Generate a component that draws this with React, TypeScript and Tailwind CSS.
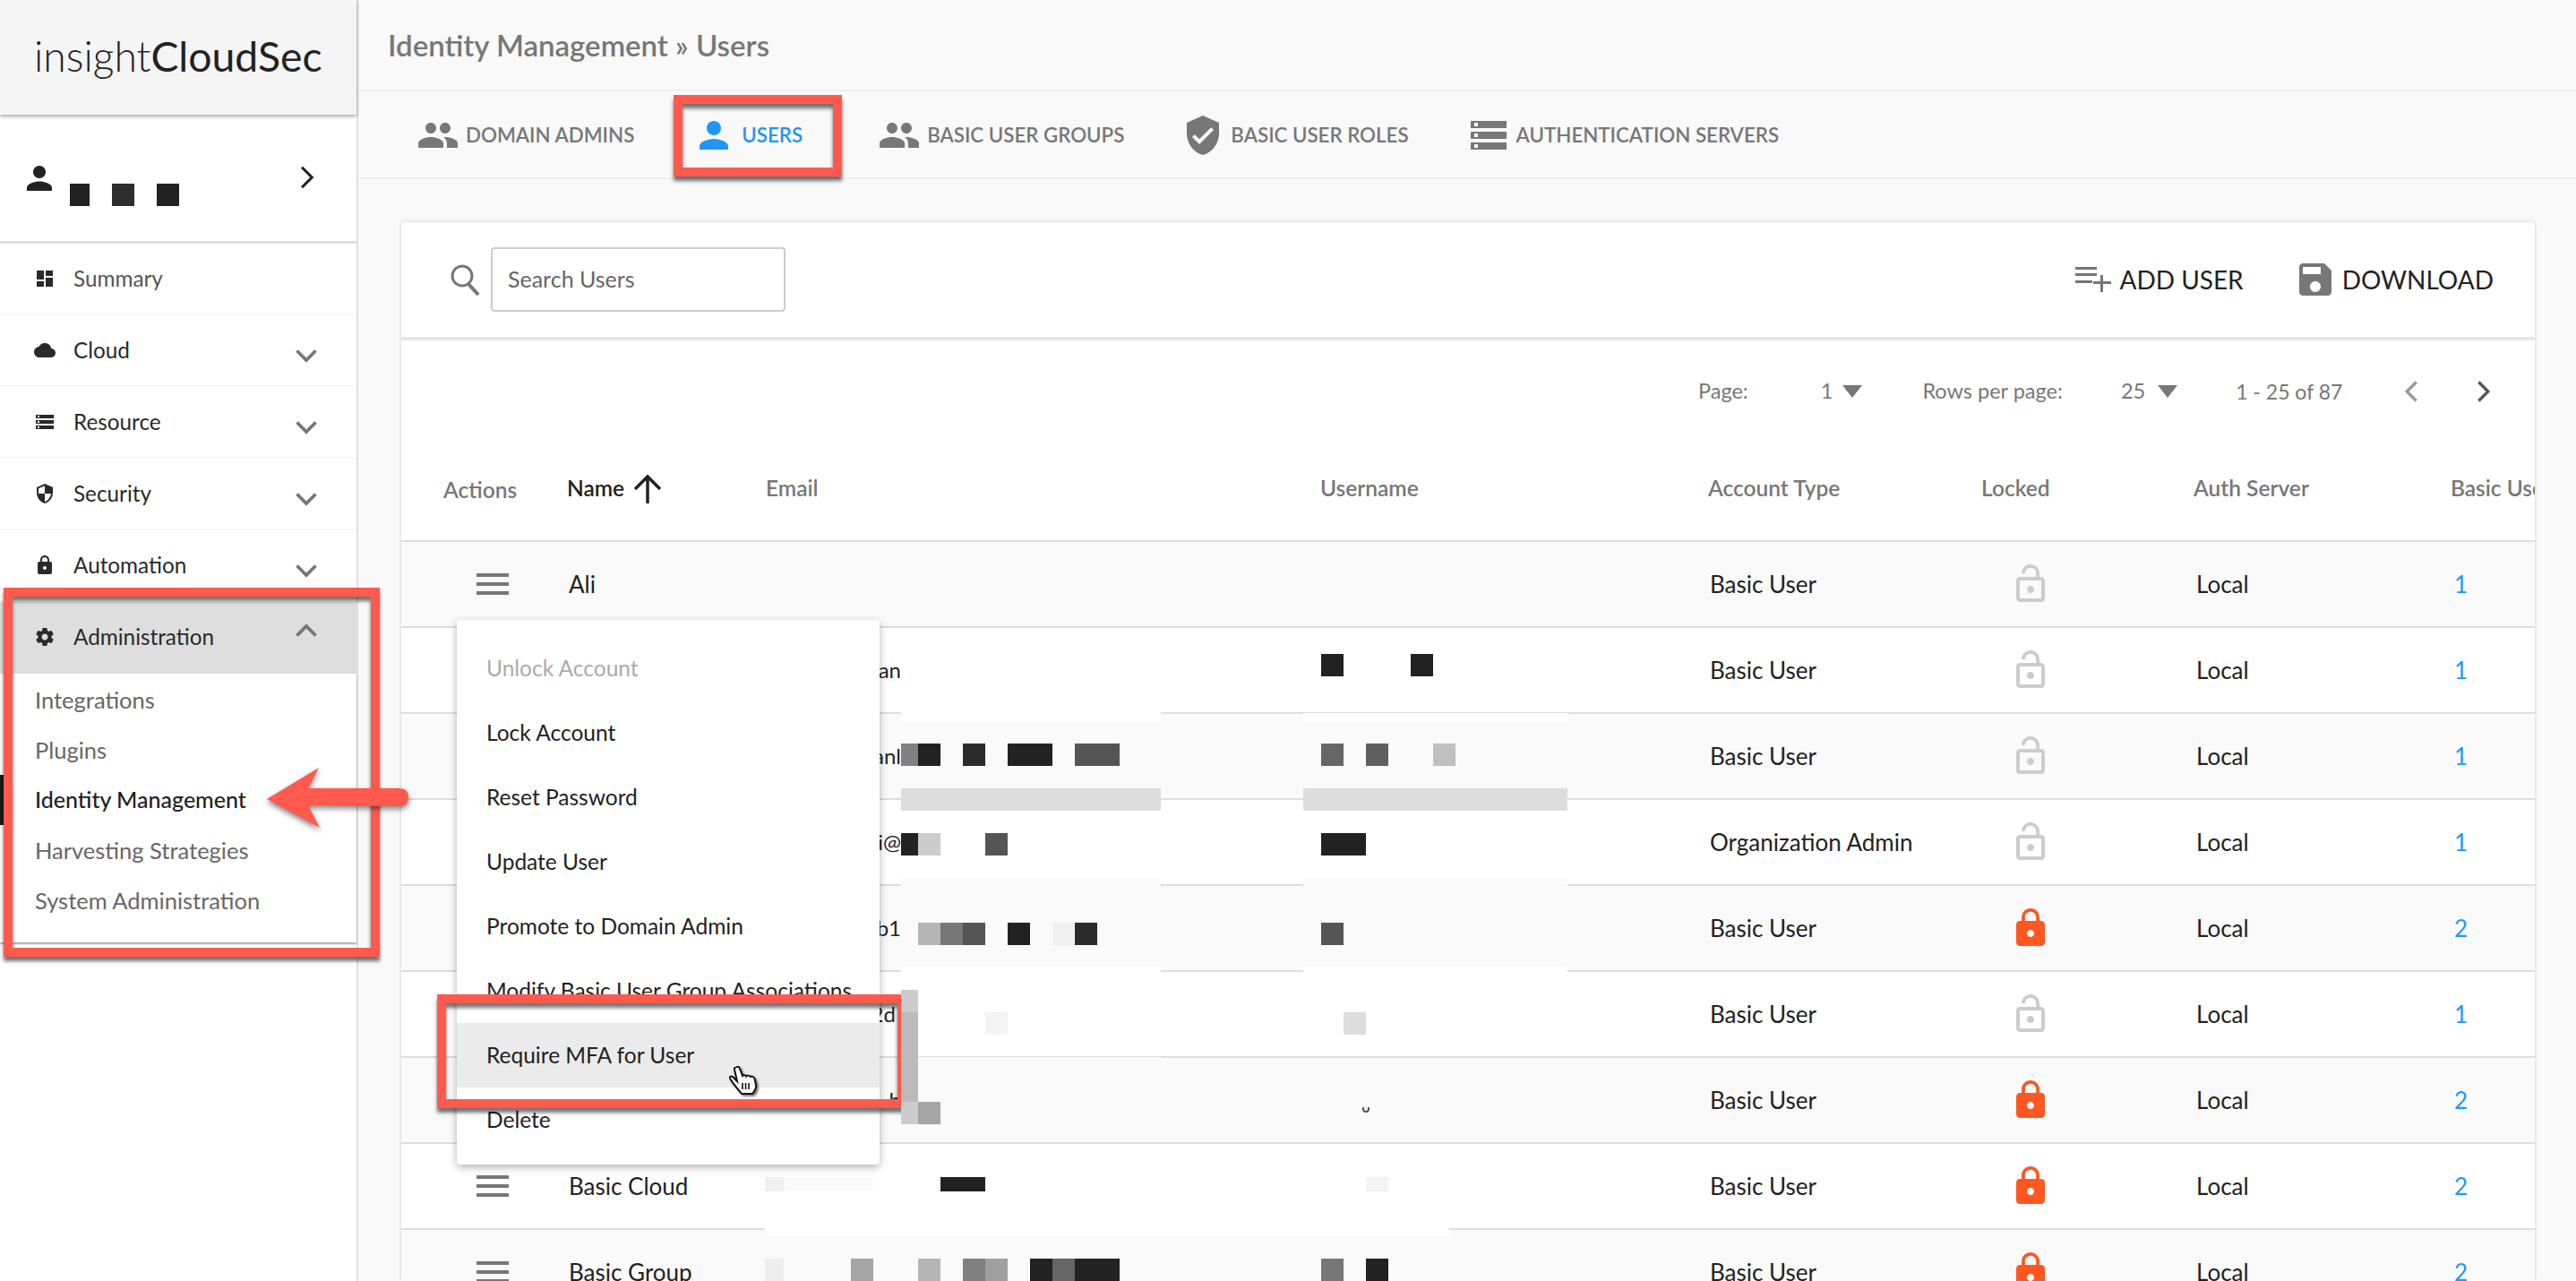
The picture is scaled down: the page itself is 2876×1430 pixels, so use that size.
import type { ReactNode } from "react";

const ICONS = {
  person: "M12 12c2.21 0 4-1.79 4-4s-1.79-4-4-4-4 1.79-4 4 1.79 4 4 4zm0 2c-2.67 0-8 1.34-8 4v2h16v-2c0-2.66-5.33-4-8-4z",
  group: "M16 11c1.66 0 2.99-1.34 2.99-3S17.66 5 16 5c-1.66 0-3 1.34-3 3s1.34 3 3 3zm-8 0c1.66 0 2.99-1.34 2.99-3S9.66 5 8 5C6.34 5 5 6.34 5 8s1.34 3 3 3zm0 2c-2.33 0-7 1.17-7 3.5V19h14v-2.5c0-2.33-4.67-3.5-7-3.5zm8 0c-.29 0-.62.02-.97.05 1.16.84 1.97 1.97 1.97 3.45V19h6v-2.5c0-2.33-4.67-3.5-7-3.5z",
  verified: "M12 1L3 5v6c0 5.55 3.84 10.74 9 12 5.16-1.26 9-6.45 9-12V5l-9-4zm-2 16l-4-4 1.41-1.41L10 14.17l6.59-6.59L18 9l-8 8z",
  dns: "M2 20h20v-4H2v4zm2-3h2v2H4v-2zM2 4v4h20V4H2zm4 3H4V5h2v2zm-4 7h20v-4H2v4zm2-3h2v2H4v-2z",
  dashboard: "M3 13h8V3H3v10zm0 8h8v-6H3v6zm10 0h8V11h-8v10zm0-18v6h8V3h-8z",
  cloud: "M19.35 10.04C18.67 6.59 15.64 4 12 4 9.11 4 6.6 5.64 5.35 8.04 2.34 8.36 0 10.91 0 14c0 3.31 2.69 6 6 6h13c2.76 0 5-2.24 5-5 0-2.64-2.05-4.78-4.65-4.96z",
  security: "M12 1L3 5v6c0 5.55 3.84 10.74 9 12 5.16-1.26 9-6.45 9-12V5l-9-4zm0 10.99h7c-.53 4.12-3.28 7.79-7 8.94V12H5V6.3l7-3.11v8.8z",
  lock: "M18 8h-1V6c0-2.76-2.24-5-5-5S7 3.24 7 6v2H6c-1.1 0-2 .9-2 2v10c0 1.1.9 2 2 2h12c1.1 0 2-.9 2-2V10c0-1.1-.9-2-2-2zm-6 9c-1.1 0-2-.9-2-2s.9-2 2-2 2 .9 2 2-.9 2-2 2zm3.1-9H8.9V6c0-1.71 1.39-3.1 3.1-3.1 1.71 0 3.1 1.39 3.1 3.1v2z",
  lockOpen: "M12 17c1.1 0 2-.9 2-2s-.9-2-2-2-2 .9-2 2 .9 2 2 2zm6-9h-1V6c0-2.76-2.24-5-5-5S7 3.24 7 6h1.9c0-1.71 1.39-3.1 3.1-3.1 1.71 0 3.1 1.39 3.1 3.1v2H6c-1.1 0-2 .9-2 2v10c0 1.1.9 2 2 2h12c1.1 0 2-.9 2-2V10c0-1.1-.9-2-2-2zm0 12H6V10h12v10z",
  settings: "M19.43 12.98c.04-.32.07-.64.07-.98s-.03-.66-.07-.98l2.11-1.65c.19-.15.24-.42.12-.64l-2-3.46c-.12-.22-.39-.3-.61-.22l-2.49 1c-.52-.4-1.08-.73-1.69-.98l-.38-2.65C14.46 2.18 14.25 2 14 2h-4c-.25 0-.46.18-.49.42l-.38 2.65c-.61.25-1.17.59-1.69.98l-2.49-1c-.23-.09-.49 0-.61.22l-2 3.46c-.13.22-.07.49.12.64l2.11 1.65c-.04.32-.07.65-.07.98s.03.66.07.98l-2.11 1.65c-.19.15-.24.42-.12.64l2 3.46c.12.22.39.3.61.22l2.49-1c.52.4 1.08.73 1.69.98l.38 2.65c.03.24.24.42.49.42h4c.25 0 .46-.18.49-.42l.38-2.65c.61-.25 1.17-.59 1.69-.98l2.49 1c.23.09.49 0 .61-.22l2-3.46c.12-.22.07-.49-.12-.64l-2.11-1.65zM12 15.5c-1.93 0-3.5-1.57-3.5-3.5s1.57-3.5 3.5-3.5 3.5 1.57 3.5 3.5-1.57 3.5-3.5 3.5z",
  save: "M17 3H5c-1.11 0-2 .9-2 2v14c0 1.1.89 2 2 2h14c1.1 0 2-.9 2-2V7l-4-4zm-5 16c-1.66 0-3-1.34-3-3s1.34-3 3-3 3 1.34 3 3-1.34 3-3 3zm3-10H5V5h10v4z",
};

function Icon({ d, className }: { d: string; className: string }) {
  return (
    <svg viewBox="0 0 24 24" className={className} fill="currentColor">
      <path d={d} />
    </svg>
  );
}

function Chevron({ dir, className, sw = 3.2 }: { dir: "up" | "down" | "left" | "right"; className: string; sw?: number }) {
  const points = {
    up: "3,15 12,6 21,15",
    down: "3,9 12,18 21,9",
    left: "16,3 7,12 16,21",
    right: "8,3 17,12 8,21",
  }[dir];
  return (
    <svg viewBox="0 0 24 24" className={className} fill="none" stroke="currentColor" strokeWidth={sw}>
      <polyline points={points} />
    </svg>
  );
}

function NavRow({ icon, label, open, plain }: { icon: string; label: string; open?: boolean; plain?: boolean }) {
  return (
    <div
      className={`flex h-[80px] items-center border-b-2 pl-[38px] pr-[42px] text-[24.3px] ${
        open ? "border-[#dedede] bg-[#dedede]" : "border-[#f7f7f7]"
      } ${plain ? "text-[#555]" : "text-[#2a2a2a]"}`}
    >
      <Icon d={icon} className="h-[24px] w-[24px] shrink-0 text-[#2a2a2a]" />
      <span className="ml-[20px] flex-1">{label}</span>
      {!plain && (
        <Chevron
          dir={open ? "up" : "down"}
          className={`h-[28px] w-[28px] text-[#777] ${open ? "-translate-y-[5px]" : "translate-y-[4px]"}`}
        />
      )}
    </div>
  );
}

function SubRow({ label, active }: { label: string; active?: boolean }) {
  return (
    <div
      className={`flex h-[56px] items-center border-l-4 pl-[35px] ${
        active ? "border-[#1a1a1a] text-[25px] font-medium text-[#222]" : "border-transparent text-[25.5px] text-[#666]"
      }`}
    >
      {label}
    </div>
  );
}

function Sidebar() {
  return (
    <div className="flex h-full w-[400px] shrink-0 flex-col border-r-2 border-[#e0e0e0] bg-white">
      <div className="relative z-10 flex h-[128px] shrink-0 items-center bg-[#f5f5f5] pb-[2px] pl-[38px] text-[46.3px] text-[#222] shadow-[0_2px_4px_rgba(0,0,0,0.35)]">
        <span className="font-light">insight</span>
        <span>CloudSec</span>
      </div>
      <div className="flex h-[144px] shrink-0 justify-between border-b-[3px] border-[#e0e0e0] pl-[23px] pr-[41px] pt-[50px]">
        <Icon d={ICONS.person} className="h-[42px] w-[42px] text-[#222]" />
        <Chevron dir="right" sw={2.5} className="mt-[5px] h-[30px] w-[30px] text-[#222]" />
      </div>
      <NavRow icon={ICONS.dashboard} label="Summary" plain />
      <NavRow icon={ICONS.cloud} label="Cloud" />
      <NavRow icon={ICONS.dns} label="Resource" />
      <NavRow icon={ICONS.security} label="Security" />
      <NavRow icon={ICONS.lock} label="Automation" />
      <NavRow icon={ICONS.settings} label="Administration" open />
      <div className="pb-[19px] pt-[1px] shadow-[0_2px_2px_rgba(0,0,0,0.35)]">
        <SubRow label="Integrations" />
        <SubRow label="Plugins" />
        <SubRow label="Identity Management" active />
        <SubRow label="Harvesting Strategies" />
        <SubRow label="System Administration" />
      </div>
    </div>
  );
}

function Tab({ icon, label, active, iconClass, className }: { icon: string; label: string; active?: boolean; iconClass: string; className: string }) {
  return (
    <div className={`flex items-center font-semibold ${active ? "text-[#2196f3]" : "text-[#777]"} ${className}`}>
      <Icon d={icon} className={`h-[48px] w-[48px] shrink-0 ${iconClass}`} />
      <span className="text-[22.3px]">{label}</span>
    </div>
  );
}

function SmallTriangle() {
  return <div className="h-0 w-0 border-x-[11px] border-t-[14px] border-x-transparent border-t-[#777]" />;
}

function Hamburger() {
  return (
    <div className="flex w-[36px] flex-col gap-[6px]">
      <div className="h-[4px] bg-[#777]" />
      <div className="h-[4px] bg-[#777]" />
      <div className="h-[4px] bg-[#777]" />
    </div>
  );
}

const COLS = "grid grid-cols-[185px_222px_619px_433px_305px_237px_287px_200px] items-center";

type Row = { name?: string; email?: string; type?: string; locked?: boolean; count: number };

const ROWS: Row[] = [
  { name: "Ali", count: 1 },
  { email: "an", count: 1 },
  { email: "anl", count: 1 },
  { email: "i@", type: "Organization Admin", count: 1 },
  { email: "b1", locked: true, count: 2 },
  { email: "2d\u00a0", count: 1 },
  { email: "b", locked: true, count: 2 },
  { name: "Basic Cloud", locked: true, count: 2 },
  { name: "Basic Group", locked: true, count: 2 },
];

function UserRow({ row, odd }: { row: Row; odd: boolean }) {
  return (
    <div className={`${COLS} h-[96px] border-b-2 border-[#ddd] text-[26px] text-[#222] ${odd ? "bg-[#fafafa]" : "bg-white"}`}>
      <div className="pl-[84px]">
        <Hamburger />
      </div>
      <div className="pl-[2px]">{row.name}</div>
      <div className="w-[151px] overflow-hidden whitespace-nowrap text-right text-[24px]">{row.email}</div>
      <div />
      <div className="pl-[2px]">{row.type ?? "Basic User"}</div>
      <div className="pl-[31px]">
        <Icon
          d={row.locked ? ICONS.lock : ICONS.lockOpen}
          className={`h-[48px] w-[48px] ${row.locked ? "text-[#ff5722]" : "text-[#ccc]"}`}
        />
      </div>
      <div className="pl-[3px]">Local</div>
      <div className="pl-[4px] text-[#2196f3]">{row.count}</div>
    </div>
  );
}

function UsersCard() {
  return (
    <div className="ml-[48px] mr-[46px] mt-[48px] min-w-0 flex-1 overflow-hidden rounded-t-[4px] bg-white shadow-[0_0_4px_rgba(0,0,0,0.18)]">
      <div className="flex h-[132px] items-center justify-between border-b-4 border-[#e6e6e6] pl-[54px] pr-[46px]">
        <div className="flex items-center gap-[12px]">
          <svg viewBox="0 0 34 36" className="h-[36px] w-[34px] text-[#777]" fill="none" stroke="currentColor">
            <circle cx="14" cy="14" r="11" strokeWidth="3" />
            <path d="M21 23 L32 35" strokeWidth="4" />
          </svg>
          <div className="flex h-[72px] w-[329px] items-center rounded-[4px] border-2 border-[#ccc] pl-[17px] text-[25px] text-[#666]">
            Search Users
          </div>
        </div>
        <div className="flex items-center text-[28px] text-[#222]">
          <svg viewBox="0 0 41 28" className="mr-[9px] h-[28px] w-[41px] text-[#777]" fill="currentColor">
            <rect x="1" y="0" width="24" height="3" />
            <rect x="1" y="7" width="24" height="3" />
            <rect x="1" y="15" width="19" height="3" />
            <rect x="21" y="16" width="20" height="3" />
            <rect x="29" y="9" width="3" height="19" />
          </svg>
          <span>ADD USER</span>
          <Icon d={ICONS.save} className="ml-[56px] mr-[6px] h-[48px] w-[48px] text-[#777]" />
          <span>DOWNLOAD</span>
        </div>
      </div>
      <div className="flex h-[114px] items-center text-[23.5px] text-[#777]">
        <span className="ml-[1448px]">Page:</span>
        <span className="ml-[81px]">1</span>
        <div className="ml-[11px]">
          <SmallTriangle />
        </div>
        <span className="ml-[67px]">Rows per page:</span>
        <span className="ml-[65px]">25</span>
        <div className="ml-[14px]">
          <SmallTriangle />
        </div>
        <span className="ml-[65px] text-[23px]">1 - 25 of 87</span>
        <Chevron dir="left" sw={2.8} className="ml-[64px] h-[28px] w-[28px] text-[#999]" />
        <Chevron dir="right" sw={2.8} className="ml-[51px] h-[28px] w-[28px] text-[#555]" />
      </div>
      <div className={`${COLS} h-[111px] border-b-2 border-[#ddd] pb-[6px] text-[24.5px] font-semibold text-[#777]`}>
        <div className="pl-[47px] pt-[3px]">Actions</div>
        <div className="flex items-center text-[#222]">
          Name
          <svg viewBox="0 0 32 32" className="ml-[10px] h-[32px] w-[32px]" fill="none" stroke="currentColor" strokeWidth="3.5">
            <path d="M16 32 V2 M2 16 L16 2 L30 16" />
          </svg>
        </div>
        <div>Email</div>
        <div>Username</div>
        <div>Account Type</div>
        <div>Locked</div>
        <div>Auth Server</div>
        <div className="whitespace-nowrap">Basic User Groups</div>
      </div>
      {ROWS.map((row, i) => (
        <UserRow key={i} row={row} odd={i % 2 === 0} />
      ))}
    </div>
  );
}

function Main() {
  return (
    <div className="flex h-full min-w-0 flex-1 flex-col bg-[#f9f9f9] pt-[6px]">
      <div className="flex h-[96px] shrink-0 items-center border-b-2 border-[#eee] pb-[4px] pl-[33px] text-[33px] font-semibold text-[#777]">
        Identity Management » Users
      </div>
      <div className="flex h-[98px] shrink-0 items-center border-b-2 border-[#eee] pl-[65px] pt-[2px]">
        <Tab icon={ICONS.group} label="DOMAIN ADMINS" iconClass="mr-[7px]" className="" />
        <Tab icon={ICONS.person} label="USERS" active iconClass="mr-[7px]" className="ml-[65px]" />
        <Tab icon={ICONS.group} label="BASIC USER GROUPS" iconClass="mr-[7px]" className="ml-[84px]" />
        <Tab icon={ICONS.verified} label="BASIC USER ROLES" iconClass="mr-[7px]" className="ml-[64px]" />
        <Tab icon={ICONS.dns} label="AUTHENTICATION SERVERS" iconClass="mr-[7px]" className="ml-[65px]" />
      </div>
      <UsersCard />
    </div>
  );
}

const MENU_ITEMS = [
  "Unlock Account",
  "Lock Account",
  "Reset Password",
  "Update User",
  "Promote to Domain Admin",
  "Modify Basic User Group Associations",
  "Require MFA for User",
  "Delete",
];

function ActionMenu() {
  return (
    <div className="absolute left-[510px] top-[692px] w-[472px] rounded-[4px] bg-white pb-[14px] pt-[18px] text-[24.5px] text-[#222] shadow-[0_3px_10px_rgba(0,0,0,0.3)]">
      {MENU_ITEMS.map((item, i) => (
        <div
          key={item}
          className={`flex h-[72px] items-center whitespace-nowrap pl-[33px] ${i === 0 ? "text-[#aaa]" : ""} ${i === 6 ? "bg-[#ebebeb]" : ""}`}
        >
          {item}
        </div>
      ))}
    </div>
  );
}

function RedBox({ className }: { className: string }): ReactNode {
  return (
    <div
      className={`absolute border-[10px] border-[#ff5a4d] shadow-[0_5px_4px_rgba(0,0,0,0.55),inset_0_5px_4px_rgba(0,0,0,0.55)] ${className}`}
    />
  );
}

// redacted parts of the picture: [x, y, w, h, colour]
const MOSAIC: [number, number, number, number, string][] = [
  [1006, 795, 290, 10, "#fff"],
  [1455, 796, 295, 9, "#fff"],
  [1006, 880, 290, 25, "#ddd"],
  [1455, 880, 295, 25, "#ddd"],
  [1006, 980, 290, 25, "#fafafa"],
  [1455, 980, 295, 10, "#fafafa"],
  [1006, 1080, 290, 25, "#fff"],
  [1455, 1080, 295, 6, "#fff"],
  [1006, 1180, 290, 25, "#fafafa"],
  [854, 1330, 764, 50, "#fff"],
  // email column
  [1006, 830, 19, 25, "#808080"],
  [1025, 830, 25, 25, "#222"],
  [1075, 830, 25, 25, "#2b2b2b"],
  [1125, 830, 50, 25, "#222"],
  [1200, 830, 50, 25, "#555"],
  [1006, 930, 19, 25, "#222"],
  [1025, 930, 25, 25, "#ccc"],
  [1100, 930, 25, 25, "#555"],
  [1025, 1030, 25, 25, "#b5b5b5"],
  [1050, 1030, 25, 25, "#777"],
  [1075, 1030, 25, 25, "#555"],
  [1125, 1030, 25, 25, "#222"],
  [1175, 1030, 25, 25, "#f0f0f0"],
  [1200, 1030, 25, 25, "#2b2b2b"],
  [1006, 1105, 19, 25, "#ccc"],
  [1006, 1130, 19, 100, "#bbb"],
  [1006, 1230, 19, 25, "#ccc"],
  [1025, 1230, 25, 25, "#a5a5a5"],
  [1100, 1130, 25, 25, "#f4f4f4"],
  [854, 1314, 21, 16, "#f0f0f0"],
  [875, 1314, 100, 16, "#fafafa"],
  [1050, 1314, 50, 16, "#222"],
  [854, 1405, 21, 25, "#eee"],
  [950, 1405, 25, 25, "#a5a5a5"],
  [1025, 1405, 25, 25, "#b5b5b5"],
  [1075, 1405, 25, 25, "#808080"],
  [1100, 1405, 25, 25, "#a0a0a0"],
  [1150, 1405, 25, 25, "#222"],
  [1175, 1405, 25, 25, "#666"],
  [1200, 1405, 50, 25, "#222"],
  // username column
  [1475, 730, 25, 25, "#222"],
  [1575, 730, 25, 25, "#222"],
  [1475, 830, 25, 25, "#666"],
  [1525, 830, 25, 25, "#5f5f5f"],
  [1600, 830, 25, 25, "#c0c0c0"],
  [1475, 930, 50, 25, "#222"],
  [1475, 1030, 25, 25, "#555"],
  [1500, 1130, 25, 25, "#ddd"],
  [1525, 1314, 25, 16, "#f4f4f4"],
  [1475, 1405, 25, 25, "#777"],
  [1525, 1405, 25, 25, "#222"],
  // sidebar user name
  [78, 205, 22, 25, "#222"],
  [125, 205, 25, 25, "#2e2e2e"],
  [175, 205, 25, 25, "#222"],
];

export default function App() {
  return (
    <div className="relative flex h-[1430px] w-[2876px] overflow-hidden bg-white font-['Lato','Liberation_Sans',sans-serif]">
      <Sidebar />
      <Main />
      <ActionMenu />
      <RedBox className="left-[752px] top-[106px] h-[91px] w-[188px]" />
      <RedBox className="left-[4px] top-[656px] h-[412px] w-[420px]" />
      <RedBox className="left-[488px] top-[1110px] h-[127px] w-[524px]" />
      <svg viewBox="0 0 164 72" className="absolute left-[296px] top-[855px] h-[72px] w-[164px] drop-shadow-[0_3px_3px_rgba(0,0,0,0.5)]">
        <path
          d="M2 37 L60 2 L48 25 L150 25 Q160 25 160 35 Q160 45 150 45 L48 44 L61 69 Z"
          fill="#ff5a4d"
        />
      </svg>
      {MOSAIC.map(([x, y, w, h, color], i) => (
        <div
          key={i}
          className="absolute"
          style={{ left: x, top: y, width: w, height: h, backgroundColor: color }}
        />
      ))}
      <div className="absolute left-[1521px] top-[1236px] h-[6px] w-[8px] rounded-b-full border-x-2 border-b-2 border-[#555]" />
      <svg viewBox="0 0 31 32" className="absolute left-[814px] top-[1190px] h-[32px] w-[31px] drop-shadow-[2px_2px_1px_rgba(0,0,0,0.5)]">
        <path
          d="M8 1 C10 0 11.5 1 12 3 L15 11 C16 9.5 18.5 10 19 11.5 C20 10 23 10.5 24 12 C25 11 28 12 28.5 14 L30 21 C30.5 25 28 29 26 31 L14 31 C12 28 5 21 1 14 C0 12 2 11 4 12 L9 17 L6 4 C5.5 2.5 6.5 1.5 8 1 Z"
          fill="#fff"
          stroke="#111"
          strokeWidth="2"
        />
        <path d="M15 19 V26 M18.5 19 V26 M22 19 V26" stroke="#111" strokeWidth="1.6" />
      </svg>
    </div>
  );
}
